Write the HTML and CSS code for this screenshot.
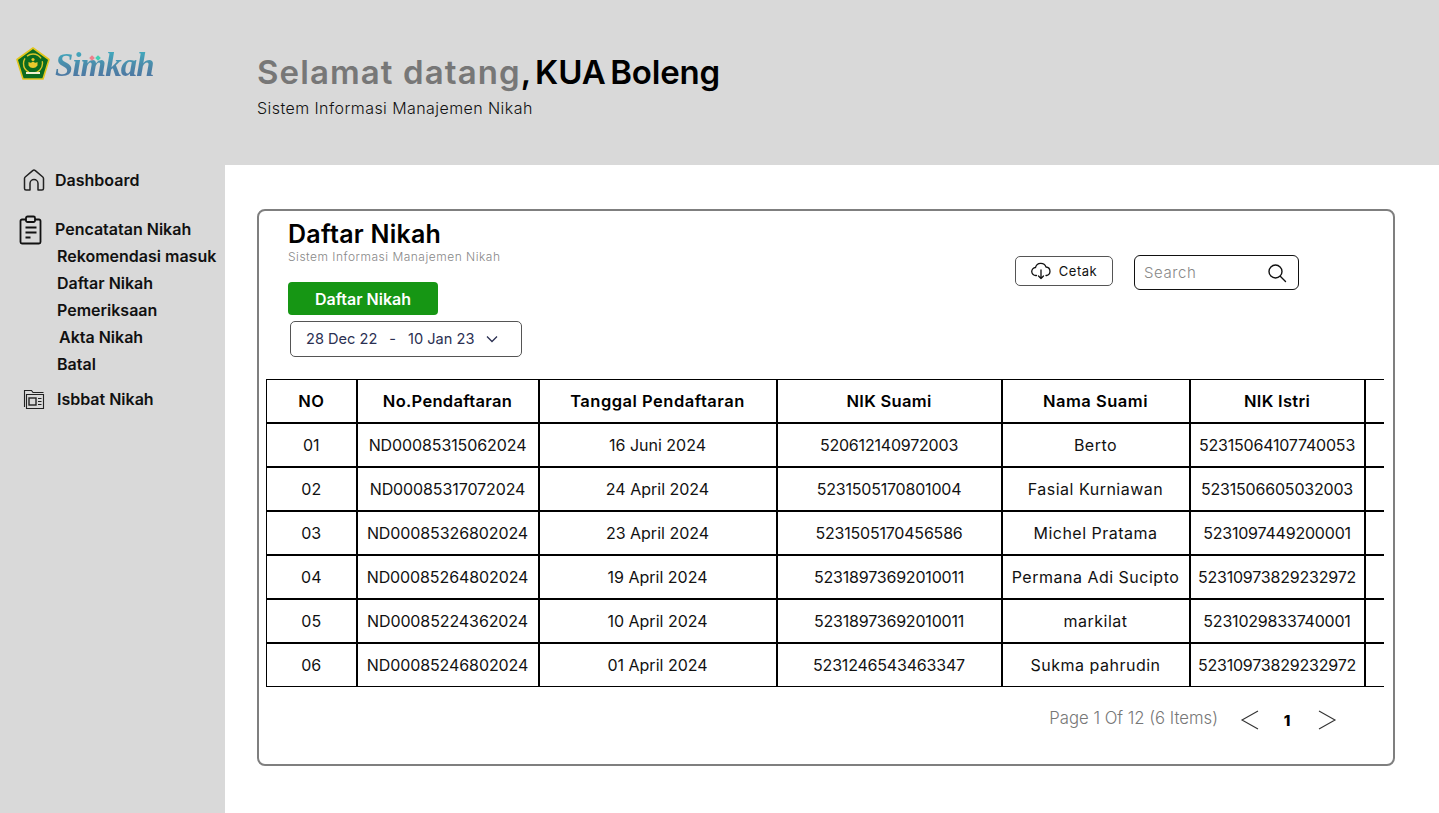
FILE: index.html
```html
<!DOCTYPE html>
<html lang="en">
  <head>
    <meta charset="UTF-8" />
    <title>Simkah - Daftar Nikah</title>
    <link rel="stylesheet" href="styles.css">
  </head>
  <body>
    <div class="layout">
      <!-- Top banner -->
      <header class="topbar">
        <div class="logo">
          <svg class="emblem" width="34" height="33" viewBox="0 0 34 33">
            <polygon points="17,1 33,12.5 27,32 7,32 1,12.5" fill="#0c6b1f" stroke="#e3c61b" stroke-width="1.6" stroke-linejoin="round"/>
            <circle cx="17" cy="16.500" r="9.500" fill="none" stroke="#d9c62a" stroke-width="1.400" stroke-dasharray="16 3"/>
            <path d="M12.500 15c1.800 1 3.300 1 4.500-.4 1.200 1.400 2.700 1.400 4.500.4v3.500c-1.200 1.700-2.700 2.500-4.500 2.500s-3.300-.8-4.500-2.500z" fill="#e8c92c"/>
            <circle cx="17" cy="12.500" r="1.600" fill="#e8c92c"/>
            <path d="M10 26h14" stroke="#f4f0d0" stroke-width="2"/>
          </svg>
          <span class="logo-text">Simkah</span>
        </div>
        <div class="welcome">
          <h1><span class="welcome-muted">Selamat datang</span><span class="welcome-name">, KUA Boleng</span></h1>
          <p>Sistem Informasi Manajemen Nikah</p>
        </div>
      </header>

      <!-- Sidebar -->
      <nav class="sidebar">
        <a class="nav-item nav-dashboard">
          <svg width="24" height="24" viewBox="0 0 24 24" fill="none" stroke="#222" stroke-width="1.500" stroke-linejoin="round">
            <path d="M2.500 20.500V10.500a2 2 0 0 1 .7-1.500L10.700 2.600a2 2 0 0 1 2.600 0L20.800 9a2 2 0 0 1 .7 1.500V20.500a1.500 1.500 0 0 1-1.500 1.500H16v-6.500a4 4 0 0 0-8 0V22H4a1.500 1.500 0 0 1-1.500-1.500z"/>
          </svg>
          Dashboard
        </a>
        <a class="nav-item nav-pencatatan">
          <svg width="24" height="30" viewBox="0 0 24 30" fill="none" stroke="#111" stroke-width="1.800" stroke-linejoin="round">
            <path d="M7 4.500H3a1.500 1.500 0 0 0-1.500 1.500v21A1.500 1.500 0 0 0 3 28.500h17a1.500 1.500 0 0 0 1.500-1.500V6A1.500 1.500 0 0 0 20 4.500h-4"/>
            <rect x="7" y="1.500" width="9" height="5.500" rx="1.500"/>
            <path d="M6.500 12.500h11M6.500 17.500h11M6.500 22.500h5"/>
          </svg>
          Pencatatan Nikah
        </a>
        <div class="subnav">
          <a>Rekomendasi masuk</a>
          <a>Daftar Nikah</a>
          <a>Pemeriksaan</a>
          <a class="akta">Akta Nikah</a>
          <a>Batal</a>
        </div>
        <a class="nav-item nav-isbbat">
          <svg width="22" height="22" viewBox="0 0 22 22" fill="none" stroke="#222" stroke-width="1.100">
            <path d="M1.500 19V2.500h7l1.500 2h10.500"/>
            <path d="M3.500 20.500V6.500h17v14z"/>
            <rect x="6" y="10" width="7" height="7" stroke-width="1.400"/>
            <path d="M15 10.500h3.500M15 13.500h3.500M15 16.500h3.500"/>
          </svg>
          Isbbat Nikah
        </a>
      </nav>

      <main class="content">
        <section class="card">
          <div class="card-head">
            <div class="card-title">
              <h2>Daftar Nikah</h2>
              <p class="card-sub">Sistem Informasi Manajemen Nikah</p>
              <button class="btn-add">Daftar Nikah</button>
              <div class="date-range">
                <span>28 Dec 22</span>
                <span class="dash">-</span>
                <span>10 Jan 23</span>
                <svg width="12" height="8" viewBox="0 0 12 8" fill="none" stroke="#2b3052" stroke-width="1.300"><path d="M1 1.500l5 5 5-5"/></svg>
              </div>
            </div>
            <div class="tools">
              <button class="btn-print">
                <svg width="20" height="18" viewBox="0 0 20 18" fill="none" stroke="#111" stroke-width="1.300" stroke-linecap="round" stroke-linejoin="round">
                  <path d="M5.500 13.500H5A4 4 0 0 1 4.500 5.500 5.500 5.500 0 0 1 15 5a4.300 4.300 0 0 1 .5 8.500H15"/>
                  <path d="M10 8v8.500M7.500 14l2.500 2.500 2.500-2.500"/>
                </svg>
                Cetak
              </button>
              <div class="search">
                <span>Search</span>
                <svg width="20" height="20" viewBox="0 0 20 20" fill="none" stroke="#111" stroke-width="1.400" stroke-linecap="round"><circle cx="8.500" cy="8.500" r="6.500"/><path d="M13.500 13.500l5 5"/></svg>
              </div>
            </div>
          </div>

          <div class="table-wrap">
            <table class="nikah-table">
              <colgroup>
                <col class="c-no"><col class="c-daftar"><col class="c-tgl"><col class="c-nik"><col class="c-nama"><col class="c-istri"><col class="c-rest">
              </colgroup>
              <thead>
                <tr><th>NO</th><th>No.Pendaftaran</th><th>Tanggal Pendaftaran</th><th>NIK Suami</th><th>Nama Suami</th><th>NIK Istri</th><th></th></tr>
              </thead>
              <tbody>
                <tr><td>01</td><td>ND00085315062024</td><td>16 Juni 2024</td><td>520612140972003</td><td>Berto</td><td>52315064107740053</td><td></td></tr>
                <tr><td>02</td><td>ND00085317072024</td><td>24 April 2024</td><td>5231505170801004</td><td>Fasial Kurniawan</td><td>5231506605032003</td><td></td></tr>
                <tr><td>03</td><td>ND00085326802024</td><td>23 April 2024</td><td>5231505170456586</td><td>Michel Pratama</td><td>5231097449200001</td><td></td></tr>
                <tr><td>04</td><td>ND00085264802024</td><td>19 April 2024</td><td>52318973692010011</td><td>Permana Adi Sucipto</td><td>52310973829232972</td><td></td></tr>
                <tr><td>05</td><td>ND00085224362024</td><td>10 April 2024</td><td>52318973692010011</td><td>markilat</td><td>5231029833740001</td><td></td></tr>
                <tr><td>06</td><td>ND00085246802024</td><td>01 April 2024</td><td>5231246543463347</td><td>Sukma pahrudin</td><td>52310973829232972</td><td></td></tr>
              </tbody>
            </table>
          </div>

          <div class="pager">
            <span class="pager-info">Page 1 Of 12 (6 Items)</span>
            <svg width="20" height="22" viewBox="0 0 20 22" fill="none" stroke="#333" stroke-width="1.100"><path d="M18 2L2 11l16 9"/></svg>
            <span class="pager-num">1</span>
            <svg width="20" height="22" viewBox="0 0 20 22" fill="none" stroke="#333" stroke-width="1.100"><path d="M2 2l16 9-16 9"/></svg>
          </div>
        </section>
      </main>
    </div>
  </body>
</html>
```

FILE: styles.css
```css
/* General styles */
html,
body {
  margin: 0;
  padding: 0;
  height: 100%;
  overflow: hidden;
  background-color: #d9d9d9;
  color: #000;
  font-family: Inter, "Open Sans", Arial, sans-serif;
}
h1,
h2,
p {
  margin: 0;
}
button {
  font-family: inherit;
}

.layout {
  display: grid;
  grid-template-columns: 225px 1fr;
  grid-template-rows: 165px 1fr;
  height: 813px;
}

/* Top banner */
.topbar {
  grid-column: 1 / 3;
  display: flex;
}
.logo {
  width: 257px;
  display: flex;
  align-items: flex-start;
  gap: 5px;
  padding: 47px 0 0 16px;
  box-sizing: border-box;
}
.logo-text {
  position: relative;
  font-family: "Liberation Serif", serif;
  font-style: italic;
  font-weight: 700;
  font-size: 33px;
  line-height: 36px;
  letter-spacing: -1px;
  background: linear-gradient(180deg, #3fb3c4 0%, #4b87a8 55%, #4f6ea0 100%);
  -webkit-background-clip: text;
  background-clip: text;
  color: transparent;
}
/* two little diamonds over the m */
.logo-text::before,
.logo-text::after {
  content: "";
  position: absolute;
  top: 9px;
  width: 4px;
  height: 4px;
  transform: rotate(45deg);
}
.logo-text::before {
  left: 35px;
  background-color: #ee7f8c;
}
.logo-text::after {
  left: 41px;
  background-color: #3fd0b4;
}
.welcome {
  padding-top: 50px;
}
.welcome h1 {
  font-size: 33px;
  line-height: 44px;
  font-weight: 600;
}
.welcome-muted {
  color: #777;
  letter-spacing: 1.100px;
}
.welcome-name {
  letter-spacing: -0.150px;
  word-spacing: -3.500px;
}
.welcome p {
  font-size: 16px;
  line-height: 24px;
  margin-top: 2px;
  font-weight: 300;
  letter-spacing: 0.430px;
  color: #111;
}

/* Sidebar */
.sidebar {
  padding-top: 3px;
}
.sidebar a {
  display: flex;
  align-items: center;
  font-size: 16px;
  font-weight: 600;
  color: #111;
  cursor: pointer;
}
.nav-item svg {
  flex: none;
}
.nav-dashboard {
  gap: 9px;
  padding-left: 22px;
  height: 24px;
}
.nav-pencatatan {
  gap: 12px;
  padding-left: 19px;
  height: 30px;
  margin-top: 22px;
}
.nav-pencatatan svg {
  margin-top: 2px;
}
.subnav {
  padding-left: 57px;
  margin-top: -2px;
}
.subnav a {
  height: 27px;
}
.subnav .akta {
  padding-left: 2px;
}
.nav-isbbat {
  gap: 12px;
  padding-left: 23px;
  height: 22px;
  margin-top: 11px;
}

/* Main content */
.content {
  background-color: #fff;
  padding: 44px 44px 0 32px;
}
.card {
  height: 557px;
  box-sizing: border-box;
  border: 2px solid #7f7f7f;
  border-radius: 8px;
  padding: 0 9px 0 6px;
}
.card-head {
  display: flex;
  justify-content: space-between;
  height: 167px;
}
.card-title {
  padding: 8px 0 0 23px;
}
.card-title h2 {
  font-size: 25px;
  line-height: 30px;
  font-weight: 600;
  letter-spacing: 0.250px;
}
.card-sub {
  font-size: 12px;
  line-height: 16px;
  font-weight: 300;
  letter-spacing: 0.500px;
  color: #888;
}
.btn-add {
  display: block;
  width: 150px;
  height: 33px;
  margin-top: 17px;
  border: none;
  border-radius: 4px;
  background-color: #169614;
  color: #fff;
  font-size: 16px;
  font-weight: 600;
  cursor: pointer;
}
.date-range {
  display: flex;
  align-items: center;
  width: 232px;
  height: 36px;
  box-sizing: border-box;
  margin: 6px 0 0 2px;
  padding-left: 15px;
  border: 1px solid #555;
  border-radius: 5px;
  font-size: 14.600px;
  color: #2b3052;
}
.date-range .dash {
  margin: 0 12px;
}
.date-range svg {
  margin-left: 12px;
}

.tools {
  display: flex;
  align-items: flex-start;
  gap: 21px;
  padding: 44px 85px 0 0;
}
.btn-print {
  display: flex;
  align-items: center;
  justify-content: center;
  gap: 8px;
  width: 98px;
  height: 30px;
  margin-top: 1px;
  background: #fff;
  border: 1px solid #555;
  border-radius: 5px;
  font-size: 13px;
  letter-spacing: 0.500px;
  color: #111;
}
.search {
  display: flex;
  align-items: center;
  justify-content: space-between;
  width: 165px;
  height: 35px;
  box-sizing: border-box;
  padding: 0 11px 0 9px;
  border: 1px solid #111;
  border-radius: 6px;
  font-size: 15px;
  font-weight: 300;
  letter-spacing: 0.600px;
  color: #888;
}

/* Table */
.table-wrap {
  width: 1118px;
  margin: 1px 0 0 1px;
  overflow: hidden;
}
.nikah-table {
  table-layout: fixed;
  border-collapse: collapse;
  width: 1219px;
  font-size: 16px;
}
.c-no { width: 90px; }
.c-daftar { width: 182px; }
.c-tgl { width: 238px; }
.c-nik { width: 225px; }
.c-nama { width: 188px; }
.c-istri { width: 175px; }
.c-rest { width: 121px; }
.nikah-table th,
.nikah-table td {
  height: 44px;
  box-sizing: border-box;
  padding: 0;
  border: 2px solid #000;
  text-align: center;
  white-space: nowrap;
}
/* outer edge is thinner than the inner grid */
.nikah-table th {
  height: 43px;
  border-top-width: 1px;
  font-size: 16.500px;
  font-weight: 600;
  letter-spacing: 0.300px;
}
.nikah-table th:first-child,
.nikah-table td:first-child {
  border-left-width: 1px;
}
.nikah-table tbody tr:last-child td {
  border-bottom-width: 1px;
}
.nikah-table th:nth-child(3),
.nikah-table th:nth-child(5) {
  letter-spacing: 0.500px;
}
.nikah-table td {
  font-weight: 400;
  color: #111;
}
.nikah-table td:nth-child(2) {
  letter-spacing: -0.100px;
}
.nikah-table td:nth-child(4),
.nikah-table td:nth-child(6) {
  letter-spacing: -0.200px;
}
.nikah-table td:nth-child(5) {
  letter-spacing: 0.500px;
}

/* Pager */
.pager {
  display: flex;
  align-items: center;
  justify-content: flex-end;
  height: 66px;
  padding-right: 47px;
}
.pager-info {
  font-size: 16.700px;
  font-weight: 300;
  color: #777;
  margin-right: 22px;
  margin-bottom: 5px;
}
.pager-num {
  font-size: 15px;
  font-weight: 800;
  margin: 0 26px 0 23px;
  width: 8px;
  text-align: center;
}
```
